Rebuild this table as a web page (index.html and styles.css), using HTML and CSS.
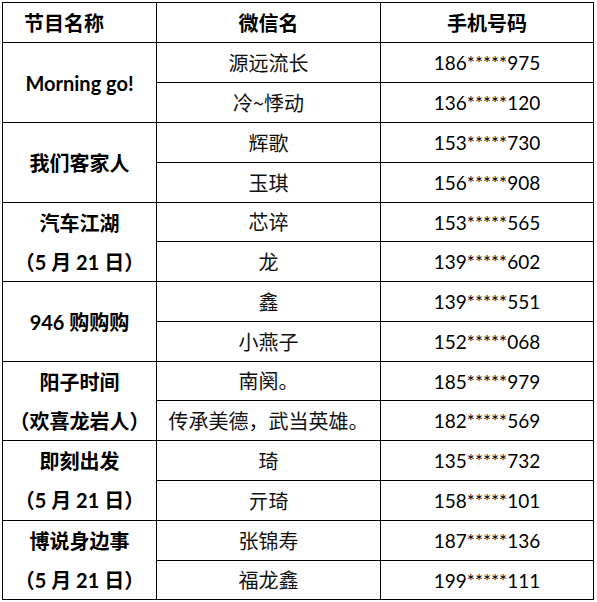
FILE: index.html
```html
<!DOCTYPE html>
<html lang="zh-CN">
<head>
<meta charset="utf-8">
<title>节目名称</title>
<link rel="stylesheet" href="styles.css">
</head>
<body>
<div class="sheet">
  <div class="cell head head-first">节目名称</div>
  <div class="cell head">微信名</div>
  <div class="cell head">手机号码</div>

  <div class="cell prog span2">Morning go!</div>
  <div class="cell name">源远流长</div>
  <div class="cell num">186*****975</div>
  <div class="cell name">冷~悸动</div>
  <div class="cell num">136*****120</div>

  <div class="cell prog span2">我们客家人</div>
  <div class="cell name">辉歌</div>
  <div class="cell num">153*****730</div>
  <div class="cell name">玉琪</div>
  <div class="cell num">156*****908</div>

  <div class="cell prog span2 two"><span>汽车江湖</span><span>（5 月 21 日）</span></div>
  <div class="cell name">芯谇</div>
  <div class="cell num">153*****565</div>
  <div class="cell name">龙</div>
  <div class="cell num">139*****602</div>

  <div class="cell prog span2">946 购购购</div>
  <div class="cell name">鑫</div>
  <div class="cell num">139*****551</div>
  <div class="cell name">小燕子</div>
  <div class="cell num">152*****068</div>

  <div class="cell prog span2 two"><span>阳子时间</span><span>（欢喜龙岩人）</span></div>
  <div class="cell name">南阕。</div>
  <div class="cell num">185*****979</div>
  <div class="cell name">传承美德，武当英雄。</div>
  <div class="cell num">182*****569</div>

  <div class="cell prog span2 two"><span>即刻出发</span><span>（5 月 21 日）</span></div>
  <div class="cell name">琦</div>
  <div class="cell num">135*****732</div>
  <div class="cell name">亓琦</div>
  <div class="cell num">158*****101</div>

  <div class="cell prog span2 two"><span>博说身边事</span><span>（5 月 21 日）</span></div>
  <div class="cell name">张锦寿</div>
  <div class="cell num">187*****136</div>
  <div class="cell name">福龙鑫</div>
  <div class="cell num">199*****111</div>
</div>
</body>
</html>
```
FILE: styles.css
```css
html, body {
  margin: 0;
  padding: 0;
  background: #fff;
}
body {
  padding: 2px 0 0 2px;
}
.sheet {
  display: grid;
  width: 592px;
  box-sizing: border-box;
  padding: 1px;
  gap: 1px;
  background: #000;
  grid-template-columns: 153px 223px 212px;
  grid-template-rows: 39px 39px 39px 39px 39px 38px 39px 39px 39px 38px 39px 39px 39px 39px 38px;
}
.cell {
  background: #fff;
  color: #000;
  display: flex;
  align-items: center;
  justify-content: center;
  font-family: Lato, "Noto Sans CJK SC", sans-serif;
  font-size: 20px;
  line-height: 1;
  white-space: nowrap;
}
.head {
  font-family: "Noto Sans CJK SC", sans-serif;
  font-weight: 700;
  font-size: 20px;
}
.head-first {
  justify-content: flex-start;
  padding-left: 21px;
}
.prog {
  font-weight: 700;
  font-size: 20px;
}
.span2 {
  grid-row: span 2;
}
.two {
  flex-direction: column;
  align-items: stretch;
}
.two span {
  flex: 1;
  display: flex;
  align-items: center;
  justify-content: center;
}
.name {
  font-family: "Noto Sans CJK SC", sans-serif;
  font-weight: 400;
  font-size: 20px;
  color: #111;
}
.num {
  font-size: 19px;
}
```
